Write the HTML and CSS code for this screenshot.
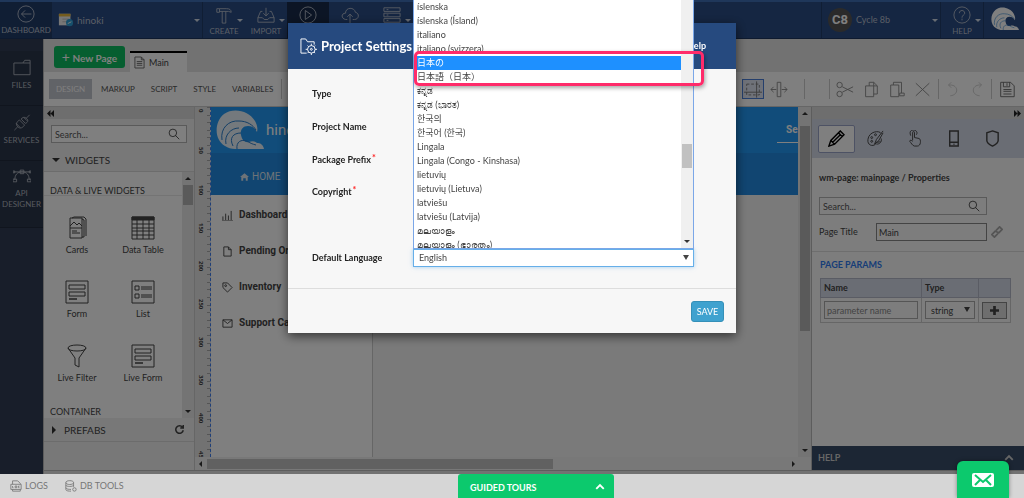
FILE: index.html
```html
<!DOCTYPE html>
<html lang="en">
<head>
	<meta charset="utf-8">
	<title>Project Settings</title>
	<link rel="stylesheet" href="styles.css">
</head>
<body>

<!-- icons used more than once or too long to keep inline -->
<svg class="defs" aria-hidden="true">
	<symbol id="wave" viewBox="0 0 48 40">
		<path fill="currentColor" stroke="none" d="M9 36C-2 30-2 12 8 4 18-3 33 1 39 11c2 4 3 7 2 11-2-4-5-6-9-6-6 0-8 5-7 9 1 5 4 8 8 7 3-1 6-1 8 1 3 0 6 1 7 6H19c-4 0-7-1-10-3z"/>
		<path class="wave-line" d="M6 30c-2-12 7-20 17-19 8 0 14 4 17 9M10 34c-2-9 5-16 13-16M17 36c-4-8 0-13 8-13M21 39c-1-7 4-10 10-8 3 2 5 3 9 4"/>
	</symbol>
	<symbol id="search" viewBox="0 0 16 16"><circle cx="6.500" cy="6.500" r="5"/><path d="M10 10l5 5"/></symbol>
	<symbol id="caret-up" viewBox="0 0 16 16"><path d="M2 11l6-6 6 6"/></symbol>
	<symbol id="form" viewBox="0 0 24 24"><path d="M1 1h22v22H1zM4 5h16v4H4zM4 12h16v4H4z"/><path stroke-width="1.500" d="M4 19h8"/></symbol>
</svg>

<div id="app">
	<header class="topbar">
		<a href="#" class="top-item dashboard">
			<svg viewBox="0 0 20 20"><circle cx="10" cy="10" r="9"/><path d="M16 10H5M9 6l-4 4 4 4"/></svg>
			<span>DASHBOARD</span>
		</a>
		<div class="project">
			<svg viewBox="0 0 18 16"><path fill="#eee" stroke="none" d="M1 1h13v13H1z"/><path fill="#e8b83c" stroke="none" d="M1 1h13v3H1z"/><path stroke="#bbb" d="M5 7h8M5 10h8"/><circle cx="13" cy="11" r="4" fill="#2d9fd8" stroke="none"/><path stroke="#fff" d="M11 12l4-2"/></svg>
			<span>hinoki</span><i class="caret"></i>
		</div>
		<a href="#" class="top-item create">
			<svg viewBox="0 0 20 20"><path d="M2 3h3v4H2zM5 3h8c3 0 5 1 5 4l-3-1H5M8 6v13h4V6"/></svg>
			<span>CREATE</span><i class="caret"></i>
		</a>
		<a href="#" class="top-item import">
			<svg viewBox="0 0 20 20"><path d="M6 6H4l-3 7v5h18v-5l-3-7h-2M1 13h5l2 2h4l2-2h5M10 2v9M7 8l3 3 3-3"/></svg>
			<span>IMPORT</span><i class="caret"></i>
		</a>
		<a href="#" class="top-item run" aria-label="Run">
			<svg viewBox="0 0 20 20"><circle cx="10" cy="10" r="9"/><path d="M7 5l7 5-7 5z"/></svg>
		</a>
		<a href="#" class="top-item deploy" aria-label="Deploy">
			<svg viewBox="0 0 20 20"><path d="M7 15H5c-5-1-5-7 0-7 0-7 10-7 11-1 5 1 4 8-1 8h-2M10 19V9M7 12l3-3 3 3"/></svg>
		</a>
		<a href="#" class="top-item servers" aria-label="Servers">
			<svg viewBox="0 0 20 20"><path d="M1 2h18v4H1zM1 8h18v4H1zM1 14h18v4H1zM4 4h2M4 10h2M4 16h2"/></svg>
			<i class="caret"></i>
		</a>
		<div class="user"><b>C8</b><span>Cycle 8b</span><i class="caret"></i></div>
		<a href="#" class="top-item help">
			<svg viewBox="0 0 20 20"><circle cx="10" cy="10" r="9"/><path d="M7 8c0-4 6-4 6 0 0 2-3 2-3 5M10 14v2"/></svg>
			<span>HELP</span><i class="caret"></i>
		</a>
		<a href="#" class="brand" aria-label="Home"><svg><use href="#wave"/></svg></a>
	</header>

	<nav class="rail">
		<a href="#"><svg viewBox="0 0 20 18"><path d="M1 4h10l2-3h6v16H1zM11 4h8"/></svg>FILES</a>
		<a href="#"><svg viewBox="0 0 20 20"><path d="M1 19l4-4M5 15c-3-3-1-6 2-8l6 6c-2 3-5 5-8 2zM19 1l-4 4M15 5c-2-2-5-1-6 1l5 5c3-1 4-4 1-6zM3 11l5 5M12 4l4 4"/></svg>SERVICES</a>
		<a href="#"><svg viewBox="0 0 20 16"><path d="M2 13c0-6 3-9 8-9s8 3 8 9M1 4h18M8 2h4v4H8zM0 3h2v2H0zM18 3h2v2h-2zM0 12h4v3H0zM16 12h4v3h-4z"/></svg>API<br>DESIGNER</a>
	</nav>

	<main class="workspace">
		<div class="tabs">
			<button class="new-page"><span>+</span> New Page</button>
			<a href="#" class="page-tab"><svg viewBox="0 0 12 14"><path d="M1 1h7l3 3v9H1zM8 1v3h3M3 6h6M3 8h6M3 10h6"/></svg>Main</a>
		</div>
		<div class="toolbar">
			<button class="mode active">DESIGN</button>
			<button class="mode">MARKUP</button>
			<button class="mode">SCRIPT</button>
			<button class="mode">STYLE</button>
			<button class="mode">VARIABLES</button>
			<i class="sep"></i>
			<span class="tools">
				<button aria-label="Grid" class="grid-on"><svg viewBox="0 0 20 18"><path stroke-dasharray="3 2" d="M3 3h14v12H3z"/><path d="M0 12h20M14 0v18"/></svg></button>
				<button aria-label="Fit width"><svg viewBox="0 0 20 18"><path d="M8 1h4v16H8zM7 9H1M4 6L1 9l3 3M13 9h6M16 6l3 3-3 3"/></svg></button>
				<i class="sep wide"></i><i class="sep"></i>
				<button aria-label="Cut"><svg viewBox="0 0 20 18"><circle cx="4" cy="4" r="3"/><circle cx="4" cy="14" r="3"/><path d="M7 6l12 6M7 12l12-6"/></svg></button>
				<button aria-label="Copy"><svg viewBox="0 0 20 18"><path d="M4 5h9v12H4zM8 5V1h5l4 4v9h-4M13 1v4h4"/></svg></button>
				<button aria-label="Paste"><svg viewBox="0 0 20 18"><path d="M3 4h9v13H3zM6 4V1h9v12M13 13h5v3h-5z"/></svg></button>
				<button aria-label="Delete"><svg viewBox="0 0 20 18"><path d="M2 2l15 14M17 2L2 16"/></svg></button>
				<i class="sep"></i>
				<button aria-label="Undo" class="faint"><svg viewBox="0 0 20 18"><path d="M7 16c10-1 9-12 0-12H5M8 1L5 4l3 3"/></svg></button>
				<button aria-label="Redo" class="faint"><svg viewBox="0 0 20 18"><path d="M13 16C3 15 4 4 13 4h2M12 1l3 3-3 3"/></svg></button>
				<i class="sep"></i>
				<button aria-label="Save" class="save-all"><svg viewBox="0 0 20 18"><path d="M3 1h11l4 4v12H3zM6 1v5h7V1M10 2v3M6 9h9M6 11h9M6 14h9"/></svg></button>
			</span>
		</div>

		<div class="panes">
			<aside class="widgets">
				<div class="pane-head"><button aria-label="Collapse"><svg viewBox="0 0 8 8"><path d="M4 0v8L0 4zM8 0v8L4 4z"/></svg></button></div>
				<label class="search"><input type="text" placeholder="Search..." aria-label="Search widgets"><svg><use href="#search"/></svg></label>
				<h2><i class="tri down"></i>WIDGETS</h2>
				<div class="widget-list">
					<div class="widget-items">
						<h3>DATA &amp; LIVE WIDGETS</h3>
						<div class="widget-grid">
							<div class="widget"><svg viewBox="0 0 24 24"><path d="M5 2h12v20H5zM5 12h12M7 15h5M7 17h8M17 3l2 1v17h-2M7 2l2-1h10l2 2v17M5 10l4-4 3 3 2-2 3 3"/></svg>Cards</div>
							<div class="widget"><svg viewBox="0 0 24 24"><path d="M1 1h22v22H1zM1 8h22M1 12h22M1 15h22M1 19h22M6 4v19M12 4v19M18 4v19"/><path fill="currentColor" d="M1 1h22v3H1z"/></svg>Data Table</div>
							<div class="widget"><svg><use href="#form"/></svg>Form</div>
							<div class="widget"><svg viewBox="0 0 24 24"><path d="M1 1h22v22H1zM4 6h4v4H4zM4 14h4v4H4zM10 7h11M10 9h11M10 15h11M10 17h11"/></svg>List</div>
							<div class="widget filter"><svg viewBox="0 0 24 24"><path d="M3 4c0-4 18-4 18 0s-18 4-18 0zM3 4l7 10v7l4 2v-9l7-10"/></svg>Live Filter</div>
							<div class="widget"><svg><use href="#form"/></svg>Live Form</div>
						</div>
						<h3>CONTAINER</h3>
					</div>
					<div class="scroll-y"><i class="tri up"></i><b></b><i class="tri down"></i></div>
				</div>
				<h2 class="prefabs"><i class="tri right"></i>PREFABS<svg viewBox="0 0 12 12"><path d="M10 3a5 5 0 1 0 1 4M11 0v4H7"/></svg></h2>
			</aside>

			<section class="canvas">
				<div class="stage">
					<div class="ruler"><span>0</span><span>50</span><span>100</span><span>150</span><span>200</span><span>250</span><span>300</span><span>350</span><span>400</span><span>450</span></div>
					<div class="page">
						<div class="page-header"><svg><use href="#wave"/></svg><span>hinoki</span><em>Se</em></div>
						<div class="page-nav"><svg viewBox="0 0 14 12"><path d="M7 0l7 6h-2v6H9V8H5v4H2V6H0z"/></svg>HOME</div>
						<div class="page-body">
							<ul>
								<li><svg viewBox="0 0 12 12"><path d="M1 7v4M4 4v7M7 6v5M10 1v10M0 12h12"/></svg>Dashboard</li>
								<li><svg viewBox="0 0 12 12"><path d="M2 1h5l3 3v7H2zM7 1v3h3"/></svg>Pending Orders</li>
								<li><svg viewBox="0 0 12 12"><path d="M1 1h5l5 5-5 5-5-5z"/><circle cx="4" cy="4" r="1"/></svg>Inventory</li>
								<li><svg viewBox="0 0 12 12"><path d="M1 2h10v8H1zM1 2l5 4 5-4"/></svg>Support Cases</li>
							</ul>
						</div>
					</div>
					<div class="scroll-y"><i class="tri up"></i><b></b><i class="tri down"></i></div>
				</div>
				<div class="scroll-x"><i class="tri left"></i><b></b><i class="tri right"></i></div>
			</section>

			<aside class="props">
				<div class="pane-head"><button aria-label="Collapse"><svg viewBox="0 0 8 8"><path d="M0 0l4 4-4 4zM4 0l4 4-4 4z"/></svg></button></div>
				<div class="prop-tabs">
					<button class="on" aria-label="Properties"><svg viewBox="0 0 18 18"><path stroke-width="1.500" d="M1 17l2-6L13 1l4 4L7 15zM3 11l4 4M11 3l4 4M5 13l8-8"/></svg></button>
					<button aria-label="Styles"><svg viewBox="0 0 18 18"><path d="M9 15c-3 3-9 1-8-5C2 1 14 0 15 4M9 15c0-4 4-1 5-3M17 1l-7 9-2 5 4-3 5-9M15 9c1 4-2 6-5 6"/><circle cx="5" cy="8" r="1"/><circle cx="9" cy="5" r="1"/><circle cx="5" cy="12" r="1"/></svg></button>
					<button aria-label="Events"><svg viewBox="0 0 18 18"><path d="M7 11V3c0-2 2-2 2 0v5l5 1c2 1 2 8-2 8H9c-2 0-4-4-5-5 0-2 2-1 3 0M5 6C3 1 6 0 8 0s5 2 3 5"/></svg></button>
					<button aria-label="Device"><svg viewBox="0 0 18 18"><path stroke-width="1.500" d="M5 1h9v16H5zM5 13h9M9 15h1"/></svg></button>
					<button aria-label="Security"><svg viewBox="0 0 18 18"><path stroke-width="1.500" d="M9 1l6 2v8c0 3-4 5-6 6-2-1-6-3-6-6V3z"/></svg></button>
				</div>
				<div class="prop-main">
					<h4>wm-page: mainpage / Properties</h4>
					<label class="search"><input type="text" placeholder="Search..." aria-label="Search properties"><svg><use href="#search"/></svg></label>
					<div class="prop"><label for="page-title">Page Title</label><input type="text" id="page-title" value="Main"><svg viewBox="0 0 14 14"><path stroke-width="2" d="M6 5l4-4 3 3-4 4-2-1M8 9l-4 4-3-3 4-4 2 1"/></svg></div>
				</div>
				<div class="params">
					<h4>PAGE PARAMS</h4>
					<table>
						<tr><th>Name</th><th>Type</th><th></th></tr>
						<tr>
							<td><input type="text" placeholder="parameter name" aria-label="Parameter name"></td>
							<td><span class="drop"><select aria-label="Parameter type"><option>string</option></select></span></td>
							<td><button aria-label="Add parameter"><svg viewBox="0 0 10 10"><path stroke-width="3" d="M5 0v10M0 5h10"/></svg></button></td>
						</tr>
					</table>
				</div>
				<a href="#" class="help-bar">HELP<svg><use href="#caret-up"/></svg></a>
			</aside>
		</div>
	</main>

	<footer class="statusbar">
		<a href="#"><svg viewBox="0 0 14 14"><path d="M3 5V1h6l3 3v1M1 5h12v6H1zM3 11v2h9v-2M3 7v2h1M6 7h2v2H6zM11 7h-1v2h1"/></svg>LOGS</a>
		<a href="#"><svg viewBox="0 0 14 14"><path d="M1 3c0-3 9-3 9 0s-9 3-9 0v8c0 2 4 2 6 2M10 3v5M1 6c0 2 9 2 9 0M1 9c0 2 5 2 6 2"/><circle cx="11" cy="11" r="2"/></svg>DB TOOLS</a>
		<button class="tours">GUIDED TOURS<svg><use href="#caret-up"/></svg></button>
		<button class="chat" aria-label="Messages"><svg viewBox="0 0 22 14"><rect width="22" height="14" rx="2" fill="#fff" stroke="none"/><path stroke-width="2" d="M3 2l8 7 8-7M3 12l5-5M19 12l-5-5"/></svg></button>
	</footer>
</div>

<div class="backdrop">
	<form class="modal">
		<div class="modal-head">
			<svg viewBox="0 0 18 18"><path d="M7 16H1V1h5l2 3h7v3"/><circle cx="12" cy="12" r="4"/><circle cx="12" cy="12" r="1"/><path d="M12 6v2M12 16v2M6 12h2M16 12h2M8 8l1 1M16 8l-1 1M8 16l1-1M16 16l-1-1"/></svg>
			<h1>Project Settings</h1>
			<a href="#">Help</a>
		</div>
		<div class="modal-body">
			<div class="field"><label for="type">Type</label><input type="text" id="type"></div>
			<div class="field"><label for="name">Project Name</label><input type="text" id="name"></div>
			<div class="field"><label for="prefix">Package Prefix<sup>*</sup></label><input type="text" id="prefix"></div>
			<div class="field tall"><label for="copyright">Copyright<sup>*</sup></label><textarea id="copyright"></textarea></div>
			<div class="field">
				<label for="lang">Default Language</label>
				<div class="lang">
					<select id="lang"><option>English</option></select>
					<div class="lang-popup">
						<ul role="listbox">
							<li role="option">íslenska</li>
							<li role="option">íslenska (Ísland)</li>
							<li role="option">italiano</li>
							<li role="option">italiano (svizzera)</li>
							<li role="option" class="selected" lang="ja">日本の</li>
							<li role="option" lang="ja">日本語（日本）</li>
							<li role="option">ಕನ್ನಡ</li>
							<li role="option">ಕನ್ನಡ (ಭಾರತ)</li>
							<li role="option" lang="ko">한국의</li>
							<li role="option" lang="ko">한국어 (한국)</li>
							<li role="option">Lingala</li>
							<li role="option">Lingala (Congo - Kinshasa)</li>
							<li role="option">lietuvių</li>
							<li role="option">lietuvių (Lietuva)</li>
							<li role="option">latviešu</li>
							<li role="option">latviešu (Latvija)</li>
							<li role="option">മലയാളം</li>
							<li role="option">മലയാളം (ഭാരതം)</li>
						</ul>
						<div class="scroll-y"><b></b><i class="tri down"></i></div>
					</div>
					<div class="marker"></div>
				</div>
			</div>
		</div>
		<div class="modal-foot"><button type="button">SAVE</button></div>
	</form>
</div>

</body>
</html>
```
FILE: styles.css
```css
*{box-sizing:border-box;}
html, body{
	height:100%;
	margin:0;
	overflow:hidden;
}
body, input, select, textarea, button{
	font-family: Lato, "Noto Sans CJK JP", sans-serif;
	font-size:9px;
}
body{
	color:#444;
	line-height:14px;
}
a{color:inherit; text-decoration:none;}
h1, h2, h3, h4, ul{margin:0; padding:0; font-size:9px; font-weight:normal; list-style:none;}
button{border:0; padding:0; background:none; color:inherit;}
input, select, textarea{color:#444; border:1px solid #aaa; background:transparent; border-radius:0; outline:0;}
svg{fill:none; stroke:currentColor; flex:none;}
.defs{position:absolute; width:0; height:0;}
.wave-line{stroke:#2a7fce; stroke-width:1;}

#app{
	display:grid;
	height:100vh;
	grid-template:39px 1fr 24px / 43px 1fr;
}

/* small parts */
.caret{
	border:3px solid transparent;
	border-top-color:#cfd8e6;
	border-bottom:0;
}
.tri{width:0; height:0; border:3px solid transparent; flex:none;}
.tri.up{border-bottom-color:#333; border-top:0;}
.tri.down{border-top-color:#333; border-bottom:0;}
.tri.left{border-right-color:#333; border-left:0;}
.tri.right{border-left-color:#333; border-right:0;}
.scroll-y{
	display:flex;
	flex-direction:column;
	align-items:center;
	width:12px;
	padding:5px 0;
	background:#e8e8e8;
}
.scroll-y b{width:10px; background:#b4b4b4;}
.scroll-y .down{margin-top:auto;}

/* top bar */
.topbar{
	grid-column:1 / 3;
	display:flex;
	background:#2a4c84;
	border-top:2px solid #3e6fb4;
	border-bottom:1px solid #1c355e;
	color:#b4bccb;
}
.top-item{
	position:relative;
	display:flex;
	flex-direction:column;
	align-items:center;
	width:42px;
	padding-top:4px;
	font-size:8px;
	line-height:14px;
}
.top-item svg{width:18px; height:18px;}
.top-item .caret{position:absolute; right:2px; top:17px;}
.dashboard{width:52px; background:#213c69; padding-top:3px;}
.project{
	display:flex;
	align-items:center;
	width:151px;
	padding:0 2px 0 6px;
	border-right:1px solid #213c69;
	font-size:10px;
}
.project svg{width:16px; height:16px; margin-right:3px;}
.project .caret, .user .caret{margin-left:auto;}
.run{background:#192b4a;}
.user{
	display:flex;
	align-items:center;
	width:120px;
	margin-left:auto;
	padding:0 2px 0 6px;
	border:solid #213c69;
	border-width:0 1px;
}
.user b{
	width:24px;
	height:24px;
	margin-right:4px;
	border-radius:50%;
	background:#555;
	color:#fff;
	font:bold 13px/24px Roboto, sans-serif;
	text-align:center;
}
.brand{
	width:41px;
	padding:4px 7px;
	border-left:1px solid #213c69;
	color:#fff;
}
.brand svg{width:28px; height:26px;}

/* left rail */
.rail{
	padding-top:12px;
	background:#303c54;
	color:#aeb4be;
	font-size:8px;
	line-height:11px;
	text-align:center;
}
.rail a{
	display:block;
	height:55px;
	padding-top:8px;
	border-bottom:1px solid #202a3c;
	background:#2b364a;
}
.rail a:last-child{height:67px; padding-top:6px;}
.rail svg{display:block; width:18px; height:17px; margin:0 auto 4px;}

/* tabs and toolbar */
.workspace{
	display:flex;
	flex-direction:column;
	min-width:0;
	min-height:0;
	padding-bottom:3px;
	border-left:1px solid #b8b8b8;
	background:#e4e4e4;
}
.tabs{
	display:flex;
	align-items:flex-end;
	height:33px;
	padding:0 10px;
}
.new-page{
	width:71px;
	height:22px;
	margin:0 5px 4px 0;
	border-radius:3px;
	background:#0cbc60;
	color:#fff;
	font-size:10px;
	font-weight:bold;
}
.new-page span{font-size:14px; line-height:14px; font-weight:normal;}
.page-tab{
	display:flex;
	align-items:center;
	width:57px;
	height:21px;
	padding-left:4px;
	border-top:2px solid #000;
	background:#fff;
}
.page-tab svg{width:11px; height:13px; margin-right:4px; color:#666;}
.toolbar{
	display:flex;
	align-items:center;
	height:34px;
	padding-left:5px;
	background:#fff;
	color:#555;
}
.mode{height:20px; margin-right:16px; font-size:8px;}
.mode.active{width:43px; margin-right:9px; background:#c3c6ce; color:#fff;}
.sep{width:1px; height:20px; margin:0 2px; background:#ccc;}
.sep.wide{margin:0 22px 0 12px;}
.toolbar > .sep{margin-left:-8px;}
.tools{display:flex; align-items:center; margin-left:auto; color:#888;}
.tools button{width:22px; height:20px; margin:0 2px;}
.tools svg{display:block; width:18px; height:17px; margin:auto;}
.tools .grid-on{border:1px solid #4a7fd8; background:#dfe4f2; color:#777;}
.tools .faint{color:#ccc; width:20px;}
.tools .save-all{margin-right:6px; color:#666;}
.panes{
	flex:1;
	display:flex;
	min-height:0;
	border-top:1px solid #ccc;
	border-bottom:1px solid #bbb;
}
.pane-head{
	display:flex;
	height:12px;
	padding:0 3px;
	background:#dcdcdc;
}
.pane-head button{display:flex; align-items:center;}
.pane-head svg{width:7px; height:7px; fill:#222; stroke:none;}
.props .pane-head{justify-content:flex-end;}

/* widgets */
.search{
	display:flex;
	align-items:center;
	height:18px;
	border:1px solid #b4b4b4;
}
.search input{flex:1; min-width:0; border:0; padding:0 3px;}
.search svg{width:12px; height:12px; margin-right:6px; color:#222;}
.search use{stroke-width:1;}
::placeholder{color:#555; opacity:1;}
.widgets{
	display:flex;
	flex-direction:column;
	width:151px;
	flex:none;
	background:#f0f0f0;
	border-right:1px solid #ccc;
}
.widgets .search{margin:6px 7px; background:#fff;}
.widgets h2{
	display:flex;
	align-items:center;
	height:23px;
	padding:0 10px 0 8px;
	border-bottom:1px solid #d8d8d8;
	font-size:10px;
}
.widgets h2 .tri{border-width:4px; margin-right:5px;}
.widgets h2 .down{border-bottom:0;}
.widgets h2 .right{border-right:0; margin-right:8px;}
.widgets .prefabs{margin-bottom:28px; height:24px; flex:none;}
.prefabs svg{width:9px; height:9px; margin-left:auto; stroke-width:2;}
.widget-list{
	flex:1;
	display:flex;
	min-height:0;
	background:#fff;
}
.widget-items{flex:1; overflow:hidden;}
.widget-list h3{
	height:24px;
	padding:12px 6px 0;
	border-bottom:1px solid #e8e8e8;
	line-height:14px;
	white-space:nowrap;
}
.widget-list .widget-grid + h3{height:14px; padding-top:0; border:0;}
.widget-grid{
	display:grid;
	grid-template-columns:66px 66px;
	grid-auto-rows:64px;
	height:209px;
	padding-top:20px;
}
.widget{
	display:flex;
	flex-direction:column;
	align-items:center;
	line-height:14px;
}
.widget svg{width:24px; height:24px; margin-bottom:3px; stroke-width:1;}
.widget-list .scroll-y b{height:20px; margin-top:5px;}

/* canvas */
.canvas{
	flex:1;
	min-width:0;
	display:flex;
	flex-direction:column;
	background:#f0f0f0;
}
.stage{flex:1; display:flex; min-height:0;}
.ruler{width:16px; overflow:hidden; border-right:1px dashed #3f7ff0; background:#e4e4e4;}
.ruler span{
	display:block;
	height:38px;
	padding:2px 5px 0 0;
	background:linear-gradient(#aaa 1px, transparent 1px 8px, #aaa 8px 9px, transparent 9px 15px, #aaa 15px 16px, transparent 16px 23px, #aaa 23px 24px, transparent 24px 30px, #aaa 30px 31px, transparent 31px) right / 3px 38px no-repeat;
	font:bold 6px/8px "Open Sans", sans-serif;
	writing-mode:vertical-rl;
	width:15px;
}
.page{
	flex:1;
	display:flex;
	flex-direction:column;
	min-width:0;
	background:#f4f4f4;
}
.page-header{
	display:flex;
	align-items:center;
	height:46px;
	flex:none;
	padding-left:5px;
	background:#2299f4;
	color:#fff;
	font:15px/20px Roboto, sans-serif;
}
.page-header svg{width:48px; height:40px; margin-right:2px; color:#e8f2fa;}
.page-header em{
	width:21px;
	margin-left:auto;
	padding-left:9px;
	border-bottom:1px solid #fff;
	font:bold 10px/24px Roboto, sans-serif;
}
.page-nav{
	display:flex;
	align-items:center;
	height:42px;
	flex:none;
	padding:6px 0 0 29px;
	background:#228ae2;
	color:#dce6f0;
	font:10px/14px Roboto, sans-serif;
}
.page-nav svg{width:9px; height:8px; margin-right:3px; fill:currentColor; stroke:none;}
.page-body{flex:1;}
.page-body ul{
	width:162px;
	height:100%;
	padding-top:2px;
	border-right:1px solid #ccc;
	background:#fff;
}
.page-body li{
	display:flex;
	align-items:center;
	height:36px;
	padding-left:11px;
	font:bold 10px/14px Roboto, sans-serif;
}
.page-body li svg{width:11px; height:11px; margin-right:6px;}
.canvas .scroll-y{width:13px;}
.canvas .scroll-y b{height:205px; margin-top:11px;}
.scroll-x{
	display:flex;
	align-items:center;
	height:13px;
	padding:0 16px 0 4px;
}
.scroll-x b{width:58%; height:10px; margin-left:5px; background:#c2c2c2;}
.scroll-x .right{margin-left:auto;}

/* properties */
.props{
	width:213px;
	flex:none;
	display:flex;
	flex-direction:column;
	border-left:1px solid #bbb;
	background:#fafafa;
}
.prop-tabs{
	display:flex;
	align-items:center;
	height:39px;
	padding:0 6px;
	gap:2px;
	background:#d4dae8;
}
.prop-tabs button{width:37px; height:28px; display:grid; place-items:center;}
.prop-tabs .on{border:1px solid #9aa4c8; border-radius:2px; background:#fff; color:#000;}
.prop-tabs svg{width:17px; height:17px;}
.prop-main{padding:13px 7px 10px; border-bottom:1px solid #ddd;}
.props h4{font-weight:bold;}
.prop-main .search{width:168px; margin:12px 0 8px;}
.prop{display:flex; align-items:center;}
.prop label{width:57px;}
.prop input{width:111px; height:18px; padding:0 2px; border-color:#888;}
.prop svg{width:12px; height:12px; margin-left:4px; color:#aaa;}
.params{padding:6px 8px;}
.params h4{color:#2f7af0; margin-bottom:6px;}
.params table{width:191px; border-collapse:collapse; table-layout:fixed;}
.params th, .params td{border:1px solid #ccc; padding:0 3px; text-align:left;}
.params th{height:19px; background:#d4dae8; border-color:#b4b8c8;}
.params td{height:25px;}
.params th:first-child{width:101px;}
.params th:last-child{width:32px;}
.params input{width:94px; height:18px; padding:0 2px; display:block;}
.params input::placeholder{color:#888;}
.params td button{
	display:grid;
	place-items:center;
	width:25px;
	height:17px;
	border:1px solid #888;
	background:#ddd;
}
.params td svg{width:9px; height:9px;}
select{appearance:none; display:block; width:100%; height:18px; padding:0 5px;}
.drop, .lang{position:relative; display:block;}
.drop:after, .lang:after{
	content:'';
	position:absolute;
	right:5px;
	top:6px;
	border:3px solid transparent;
	border-top:5px solid #444;
	border-bottom:0;
}
.help-bar{
	display:flex;
	align-items:center;
	justify-content:space-between;
	height:24px;
	margin-top:auto;
	padding:0 10px 0 6px;
	background:#384c68;
	color:#ccc;
	font-weight:bold;
}
.help-bar svg{width:10px; height:10px; stroke-width:3;}

/* status bar */
.statusbar{
	grid-column:1 / 3;
	position:relative;
	display:flex;
	align-items:center;
	gap:17px;
	padding-left:10px;
	background:#d6d6d6;
	color:#777;
}
.statusbar a{display:flex; align-items:center; gap:3px;}
.statusbar a svg{width:12px; height:12px;}
.tours{
	position:absolute;
	left:calc(50% - 54px);
	bottom:0;
	display:flex;
	align-items:center;
	justify-content:space-between;
	width:156px;
	height:24px;
	padding:2px 9px 0 12px;
	border-radius:3px 3px 0 0;
	background:#0cc96d;
	color:#fff;
	font-weight:bold;
}
.tours svg{width:10px; height:10px; stroke-width:3;}
.chat{
	position:absolute;
	right:15px;
	bottom:0;
	z-index:3;
	display:grid;
	place-items:center;
	width:52px;
	height:37px;
	border-radius:6px 6px 0 0;
	background:#0cc96d;
	color:#0cc96d;
	box-shadow:0 0 4px rgba(0,0,0,.4);
}
.chat svg{width:22px; height:14px;}

/* modal */
.backdrop{
	position:fixed;
	inset:0 0 24px;
	display:flex;
	justify-content:center;
	align-items:flex-start;
	padding-top:23px;
	background:rgba(0,0,0,.5);
}
.modal{
	width:448px;
	background:#f7f7f7;
	box-shadow:0 3px 10px rgba(0,0,0,.6);
	font-weight:bold;
}
.modal-head{
	display:flex;
	align-items:center;
	height:46px;
	padding:0 30px 0 12px;
	background:#264a7f;
	color:#fff;
}
.modal-head svg{width:17px; height:17px; margin-right:4px;}
.modal-head h1{font-size:13px; font-weight:bold;}
.modal-head a{margin-left:auto;}
.modal-body{padding:8px 42px 14px 24px;}
.field{display:flex; align-items:center; height:33px;}
.field label{width:101px; color:#222;}
.field sup{color:#f22; font-size:9px; line-height:1px; vertical-align:2px; margin-left:1px;}
.field > input, .field textarea, .lang{flex:1; min-width:0;}
.field > input, .field textarea{height:18px; border-color:#ccc; background:#fff; margin-right:1px;}
.field.tall{height:65px; align-items:flex-start; padding-top:9px;}
.field textarea{height:48px; resize:none;}
.lang select{border:1px solid #66afe9; background:#fff; box-shadow:0 0 4px rgba(102,175,233,.6);}
.lang-popup{
	position:absolute;
	left:0;
	right:0;
	bottom:100%;
	display:flex;
	height:250px;
	border:1px solid #7ba7e8;
	background:#fff;
	overflow:hidden;
	font-weight:normal;
}
.lang-popup ul{flex:1;}
.lang-popup li{height:14px; padding:0 3px; white-space:nowrap;}
.lang-popup .selected{background:#1e90ff; color:#fff;}
.lang-popup .scroll-y{background:#f0f0f0;}
.lang-popup .scroll-y b{height:24px; margin-top:139px; background:#c1c1c1;}
.marker{
	position:absolute;
	left:1px;
	right:-10px;
	bottom:181px;
	height:35px;
	border:3px solid #ff2b6a;
	border-radius:5px;
	box-shadow:1px 2px 4px rgba(0,0,0,.35);
}
.modal-foot{
	display:flex;
	justify-content:flex-end;
	height:45px;
	padding:12px;
	border-top:1px solid #ddd;
}
.modal-foot button{
	width:33px;
	height:21px;
	border:1px solid #3590b8;
	border-radius:3px;
	background:#3fa2cf;
	color:#fff;
}
```
